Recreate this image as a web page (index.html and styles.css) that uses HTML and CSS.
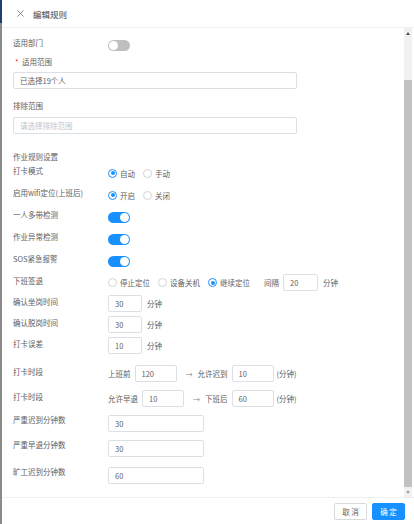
FILE: index.html
```html
<!DOCTYPE html>
<html lang="zh-CN">
<head>
<meta charset="utf-8">
<title>编辑规则</title>
<link rel="stylesheet" href="styles.css">
</head>
<body>
<div class="screen">
  <div class="edge"><div class="edge-top"></div><div class="edge-rest"></div></div>
  <div class="drawer">
    <header class="drawer-head">
      <svg class="close" width="7" height="7" viewBox="0 0 7 7"><path d="M0.5 0.5 L6.5 6.5 M6.5 0.5 L0.5 6.5" stroke="#7a7a7a" stroke-width="0.9" fill="none"/></svg>
      <span class="title">编辑规则</span>
    </header>

    <div class="drawer-body">
      <div class="form">
        <div class="row">
          <span class="label">适用部门</span>
          <span class="switch"><span class="knob"></span></span>
        </div>
        <div class="field-label"><span class="req">*</span>适用范围</div>
        <div class="input wide gap-s">已选择19个人</div>
        <div class="field-label gap-l">排除范围</div>
        <div class="input wide placeholder gap-m">请选择排除范围</div>

        <div class="section-title">作业规则设置</div>
        <div class="row">
          <span class="label">打卡模式</span>
          <span class="radio checked"><i></i>自动</span>
          <span class="radio"><i></i>手动</span>
        </div>
        <div class="row">
          <span class="label">启用wifi定位(上班后)</span>
          <span class="radio checked"><i></i>开启</span>
          <span class="radio"><i></i>关闭</span>
        </div>
        <div class="row">
          <span class="label">一人多带检测</span>
          <span class="switch on"><span class="knob"></span></span>
        </div>
        <div class="row">
          <span class="label">作业异常检测</span>
          <span class="switch on"><span class="knob"></span></span>
        </div>
        <div class="row">
          <span class="label">SOS紧急报警</span>
          <span class="switch on"><span class="knob"></span></span>
        </div>
        <div class="row tight">
          <span class="label">下班签退</span>
          <span class="radio"><i></i>停止定位</span>
          <span class="radio"><i></i>设备关机</span>
          <span class="radio checked"><i></i>继续定位</span>
          <span class="text interval">间隔</span>
          <span class="input interval-input">20</span>
          <span class="unit">分钟</span>
        </div>
        <div class="row tight">
          <span class="label">确认坐岗时间</span>
          <span class="input short">30</span>
          <span class="unit">分钟</span>
        </div>
        <div class="row tight">
          <span class="label">确认脱岗时间</span>
          <span class="input short">30</span>
          <span class="unit">分钟</span>
        </div>
        <div class="row tight">
          <span class="label">打卡误差</span>
          <span class="input short">10</span>
          <span class="unit">分钟</span>
        </div>

        <div class="row loose gap-t">
          <span class="label">打卡时段</span>
          <span class="text">上班前</span>
          <span class="input mid">120</span>
          <span class="arrow">→</span>
          <span class="text">允许迟到</span>
          <span class="input mid">10</span>
          <span class="paren">(分钟)</span>
        </div>
        <div class="row loose">
          <span class="label">打卡时段</span>
          <span class="text">允许早退</span>
          <span class="input mid">10</span>
          <span class="arrow">→</span>
          <span class="text">下班后</span>
          <span class="input mid">60</span>
          <span class="paren">(分钟)</span>
        </div>
        <div class="row loose">
          <span class="label up">严重迟到分钟数</span>
          <span class="input long">30</span>
        </div>
        <div class="row loose">
          <span class="label up">严重早退分钟数</span>
          <span class="input long">30</span>
        </div>
        <div class="row loose gap-b">
          <span class="label up">旷工迟到分钟数</span>
          <span class="input long">60</span>
        </div>
      </div>

      <div class="scrollbar">
        <div class="sb-btn"><span class="tri-up"></span></div>
        <div class="sb-track"><div class="sb-thumb"></div></div>
        <div class="sb-btn"><span class="tri-down"></span></div>
      </div>
    </div>

    <footer class="drawer-foot">
      <button class="btn">取 消</button>
      <button class="btn primary">确 定</button>
    </footer>
  </div>
</div>
</body>
</html>
```

FILE: styles.css
```css
html, body {
  margin: 0;
  padding: 0;
  width: 414px;
  height: 524px;
  overflow: hidden;
  background: #fff;
  font-family: "Noto Sans CJK SC", "Noto Sans", sans-serif;
  font-size: 7.5px;
  color: #606060;
}

.screen {
  display: flex;
  height: 524px;
}

/* sliver of the page behind the drawer */
.edge {
  width: 2px;
  display: flex;
  flex-direction: column;
}
.edge-top { height: 23px; background: #1f3c73; }
.edge-rest { flex: 1; background: #8a8a8a; }

.drawer {
  flex: 1;
  min-width: 0;
  display: flex;
  flex-direction: column;
  background: #fff;
}

.drawer-head {
  height: 27px;
  border-bottom: 1px solid #efefef;
  display: flex;
  align-items: center;
  padding-left: 15px;
  gap: 9px;
}
.title {
  font-size: 8.5px;
  color: #444;
}

.drawer-body {
  height: 469px;
  display: flex;
}

.form {
  flex: 1;
  min-width: 0;
  overflow: hidden;
  padding: 6px 0 0 11px;
  display: flex;
  flex-direction: column;
  align-items: flex-start;
}

.row {
  display: flex;
  align-items: center;
  height: 22px;
  flex: none;
}
.row.tight { height: 21px; }
.row.loose { height: 25px; }
.gap-t { margin-top: 5px; }
.gap-b { margin-top: 2px; }

.label {
  width: 95px;
  flex: none;
  padding-bottom: 4px;
  line-height: 10px;
  white-space: nowrap;
}
.label.up { padding-bottom: 8px; }

.field-label {
  height: 12px;
  line-height: 12px;
  display: flex;
  align-items: center;
}
.req {
  color: #f5222d;
  width: 7px;
  margin-left: 2px;
}
.gap-s { margin-top: 4px; }
.gap-m { margin-top: 5px; }
.gap-l { margin-top: 11px; }

.section-title {
  height: 11px;
  line-height: 11px;
  margin-top: 17px;
}

.input {
  box-sizing: border-box;
  height: 17px;
  border: 1px solid #dcdfe6;
  border-radius: 2px;
  padding: 0 6px;
  display: flex;
  align-items: center;
  color: #606266;
  background: #fff;
  flex: none;
}
.input.wide { width: 284px; }
.input.placeholder { color: #c0c4cc; }
.input.short { width: 34px; }
.input.mid { width: 42px; }
.input.long { width: 96px; }
.input.interval-input { width: 35px; }

.unit { margin-left: 5px; }
.paren { margin-left: 3px; }
.text { margin-right: 4px; }
.text.interval { margin-left: 6px; }
.arrow {
  margin: 0 5px 0 9px;
  color: #888;
  font-size: 7px;
}

/* radio */
.radio {
  display: flex;
  align-items: center;
  margin-right: 8px;
}
.radio i {
  box-sizing: border-box;
  width: 9px;
  height: 9px;
  border: 1px solid #d4d4d4;
  border-radius: 50%;
  margin-right: 3px;
  display: flex;
  align-items: center;
  justify-content: center;
}
.radio.checked i { border-color: #1890ff; }
.radio.checked i::after {
  content: "";
  width: 4px;
  height: 4px;
  border-radius: 50%;
  background: #1890ff;
}

/* switch */
.switch {
  box-sizing: border-box;
  width: 22px;
  height: 11px;
  border-radius: 6px;
  background: #bfbfbf;
  padding: 1px;
  display: flex;
  justify-content: flex-start;
}
.switch.on {
  background: #1890ff;
  justify-content: flex-end;
}
.knob {
  width: 9px;
  height: 9px;
  border-radius: 50%;
  background: #fff;
}

/* scrollbar */
.scrollbar {
  width: 8px;
  margin-right: 2px;
  background: #f1f1f1;
  display: flex;
  flex-direction: column;
}
.sb-btn {
  height: 10px;
  display: flex;
  align-items: center;
  justify-content: center;
}
.tri-up {
  width: 0; height: 0;
  border-left: 2px solid transparent;
  border-right: 2px solid transparent;
  border-bottom: 3px solid #505050;
}
.tri-down {
  width: 0; height: 0;
  border-left: 2px solid transparent;
  border-right: 2px solid transparent;
  border-top: 3px solid #a3a3a3;
}
.sb-track {
  flex: 1;
  display: flex;
  flex-direction: column;
}
.sb-thumb {
  flex: 1;
  margin-top: 42px;
  background: #c1c1c1;
}

/* footer */
.drawer-foot {
  height: 26px;
  border-top: 1px solid #efefef;
  display: flex;
  justify-content: flex-end;
  align-items: center;
  gap: 5px;
  padding-right: 9px;
}
.btn {
  box-sizing: border-box;
  width: 33px;
  height: 17px;
  padding: 0;
  border: 1px solid #d9d9d9;
  border-radius: 2px;
  background: #fff;
  color: #606060;
  font-family: "Noto Sans CJK SC", "Noto Sans", sans-serif;
  font-size: 7.5px;
  line-height: 15px;
}
.btn.primary {
  background: #1890ff;
  border-color: #1890ff;
  color: #fff;
}
```
